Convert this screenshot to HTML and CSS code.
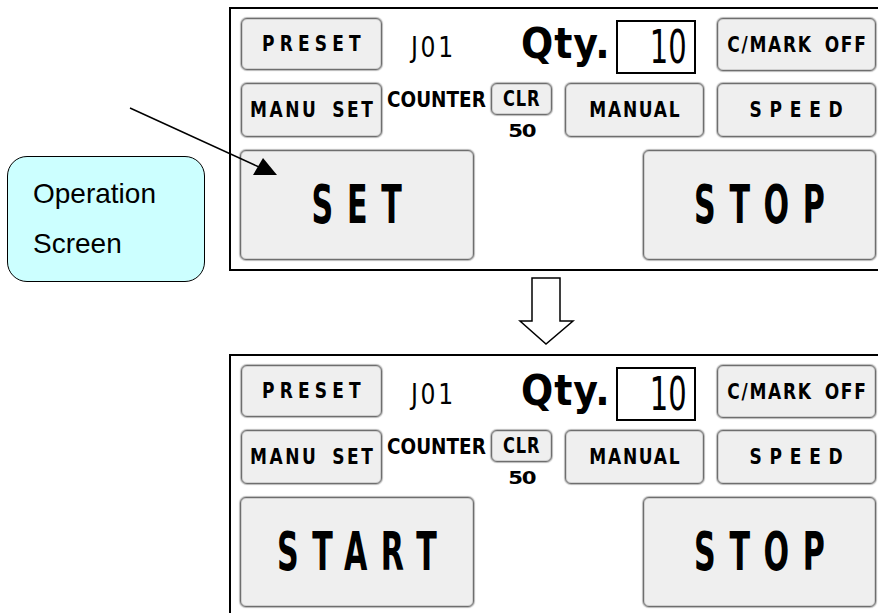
FILE: index.html
```html
<!DOCTYPE html>
<html>

<head>
    <title>Operation Screen</title>
    <link rel="stylesheet" href="styles.css">
</head>

<body>
    <div class="page">
        <div class="callout">
            <p>Operation</p>
            <p>Screen</p>
        </div>
        <svg class="pointer" width="878" height="613" viewBox="0 0 878 613">
            <line x1="130" y1="108" x2="259" y2="167" stroke="#000" stroke-width="1.5" />
            <polygon points="277,175 263,158 253,175" fill="#000" />
        </svg>

        <div class="screens">
            <div class="panel">
                <div class="row row-top">
                    <div class="btn btn-preset"><span class="label preset">PRESET</span></div>
                    <div class="job">J01</div>
                    <div class="qty">Qty.</div>
                    <div class="count-box"><span class="count">10</span></div>
                    <div class="btn btn-mark"><span class="label mark">C/MARK OFF</span></div>
                </div>
                <div class="row row-mid">
                    <div class="btn btn-manuset"><span class="label manuset">MANU SET</span></div>
                    <div class="counter-label">COUNTER</div>
                    <div class="clr-col">
                        <div class="btn btn-clr"><span class="label clr">CLR</span></div>
                        <div class="counter-value">50</div>
                    </div>
                    <div class="btn btn-manual"><span class="label manual">MANUAL</span></div>
                    <div class="btn btn-speed"><span class="label speed">SPEED</span></div>
                </div>
                <div class="row row-big">
                    <div class="btn btn-big btn-go"><span class="big-label">SET</span></div>
                    <div class="btn btn-big btn-stop"><span class="big-label">STOP</span></div>
                </div>
            </div>

            <div class="transition">
                <svg width="60" height="82" viewBox="0 0 60 82">
                    <polygon points="15,6 43,6 43,49 56,49 29,72 3,49 15,49" fill="#fff" stroke="#000" stroke-width="1.5" />
                </svg>
            </div>

            <div class="panel">
                <div class="row row-top">
                    <div class="btn btn-preset"><span class="label preset">PRESET</span></div>
                    <div class="job">J01</div>
                    <div class="qty">Qty.</div>
                    <div class="count-box"><span class="count">10</span></div>
                    <div class="btn btn-mark"><span class="label mark">C/MARK OFF</span></div>
                </div>
                <div class="row row-mid">
                    <div class="btn btn-manuset"><span class="label manuset">MANU SET</span></div>
                    <div class="counter-label">COUNTER</div>
                    <div class="clr-col">
                        <div class="btn btn-clr"><span class="label clr">CLR</span></div>
                        <div class="counter-value">50</div>
                    </div>
                    <div class="btn btn-manual"><span class="label manual">MANUAL</span></div>
                    <div class="btn btn-speed"><span class="label speed">SPEED</span></div>
                </div>
                <div class="row row-big">
                    <div class="btn btn-big btn-go"><span class="big-label">START</span></div>
                    <div class="btn btn-big btn-stop"><span class="big-label">STOP</span></div>
                </div>
            </div>
        </div>
    </div>
</body>

</html>
```

FILE: styles.css
```css
html,
body {
    margin: 0;
    padding: 0;
    background-color: #fff;
    overflow: hidden;
}

.page {
    position: relative;
    width: 878px;
    height: 613px;
    overflow: hidden;
    font-family: "DejaVu Sans Condensed", "DejaVu Sans", sans-serif;
    color: #000;
}

/* annotation */
.callout {
    position: absolute;
    left: 7px;
    top: 156px;
    box-sizing: border-box;
    width: 198px;
    height: 126px;
    background-color: #ccffff;
    border: 1px solid #000;
    border-radius: 20px;
    font-family: "Liberation Sans", Arial, sans-serif;
    font-size: 28px;
    line-height: 50px;
    padding: 12px 0 0 25px;
}

.callout p {
    margin: 0;
}

.pointer {
    position: absolute;
    left: 0;
    top: 0;
}

.screens {
    padding: 7px 0 0 229px;
}

.panel {
    width: 660px;
    height: 264px;
    box-sizing: border-box;
    border: 2px solid #000;
    border-right: none;
    padding: 9px 0 0 10px;
}

.transition {
    height: 82px;
    margin-top: 1px;
    padding-left: 288px;
}

.transition svg {
    display: block;
}

.row {
    display: flex;
    align-items: flex-start;
}

.row-top {
    height: 65px;
}

.row-mid {
    height: 67px;
}

/* buttons */
.btn {
    box-sizing: border-box;
    display: flex;
    align-items: center;
    justify-content: center;
    background-color: #efefef;
    border: 1px solid #6e6e6e;
    border-radius: 6px;
    box-shadow: inset 0 0 0 1px #d0d0d0, 0 0 1px 1px #b8b8b8;
    white-space: nowrap;
}

.label {
    display: inline-block;
    font-weight: bold;
    font-size: 22px;
    line-height: 1;
    transform: scaleX(0.86);
}

.btn-preset {
    width: 141px;
    height: 52px;
}

.preset {
    letter-spacing: 6px;
    padding-left: 6px;
}

.job {
    margin: 15px 0 0 29px;
    width: 110px;
    font-size: 29px;
    line-height: 1;
    letter-spacing: 3px;
    transform: scaleX(0.9);
    transform-origin: left;
}

.qty {
    margin-top: 4px;
    width: 95px;
    font-weight: bold;
    font-size: 43px;
    line-height: 1;
    letter-spacing: 1px;
    transform: scaleX(0.98);
    transform-origin: left;
}

.count-box {
    box-sizing: border-box;
    margin-top: 2px;
    width: 80px;
    height: 54px;
    border: 2px solid #000;
    background-color: #fff;
    display: flex;
    align-items: center;
    justify-content: flex-end;
    padding-right: 7px;
}

.count {
    display: inline-block;
    font-size: 46px;
    line-height: 1;
    font-weight: 300;
    transform: scaleX(0.7);
    transform-origin: right;
}

.btn-mark {
    margin-left: 21px;
    width: 159px;
    height: 53px;
}

.mark {
    letter-spacing: 2px;
    word-spacing: 5px;
    padding-left: 2px;
}

.btn-manuset {
    width: 141px;
    height: 54px;
}

.manuset {
    letter-spacing: 3px;
    word-spacing: 6px;
    padding-left: 3px;
}

.counter-label {
    margin: 6px 0 0 5px;
    width: 99px;
    font-weight: bold;
    font-size: 22px;
    line-height: 1;
    transform: scaleX(0.93);
    transform-origin: left;
}

.clr-col {
    margin-left: 5px;
    width: 61px;
    display: flex;
    flex-direction: column;
    align-items: center;
}

.btn-clr {
    width: 61px;
    height: 32px;
}

.clr {
    font-size: 21px;
    letter-spacing: 1px;
}

.counter-value {
    margin-top: 8px;
    font-family: "DejaVu Sans", sans-serif;
    font-weight: bold;
    font-size: 17px;
    line-height: 1;
    letter-spacing: -1px;
    transform: scaleX(1.25);
}

.btn-manual {
    margin-left: 13px;
    width: 139px;
    height: 54px;
}

.manual {
    letter-spacing: 2px;
    padding-left: 2px;
}

.btn-speed {
    margin-left: 13px;
    width: 159px;
    height: 54px;
}

.speed {
    letter-spacing: 9px;
    padding-left: 9px;
}

.btn-big {
    height: 110px;
}

.btn-go {
    margin-left: -1px;
    width: 234px;
}

.btn-stop {
    margin-left: 169px;
    width: 233px;
}

.big-label {
    display: inline-block;
    font-weight: bold;
    font-size: 54px;
    line-height: 1;
    letter-spacing: 22px;
    padding-left: 22px;
    transform: scaleX(0.62);
}
```
